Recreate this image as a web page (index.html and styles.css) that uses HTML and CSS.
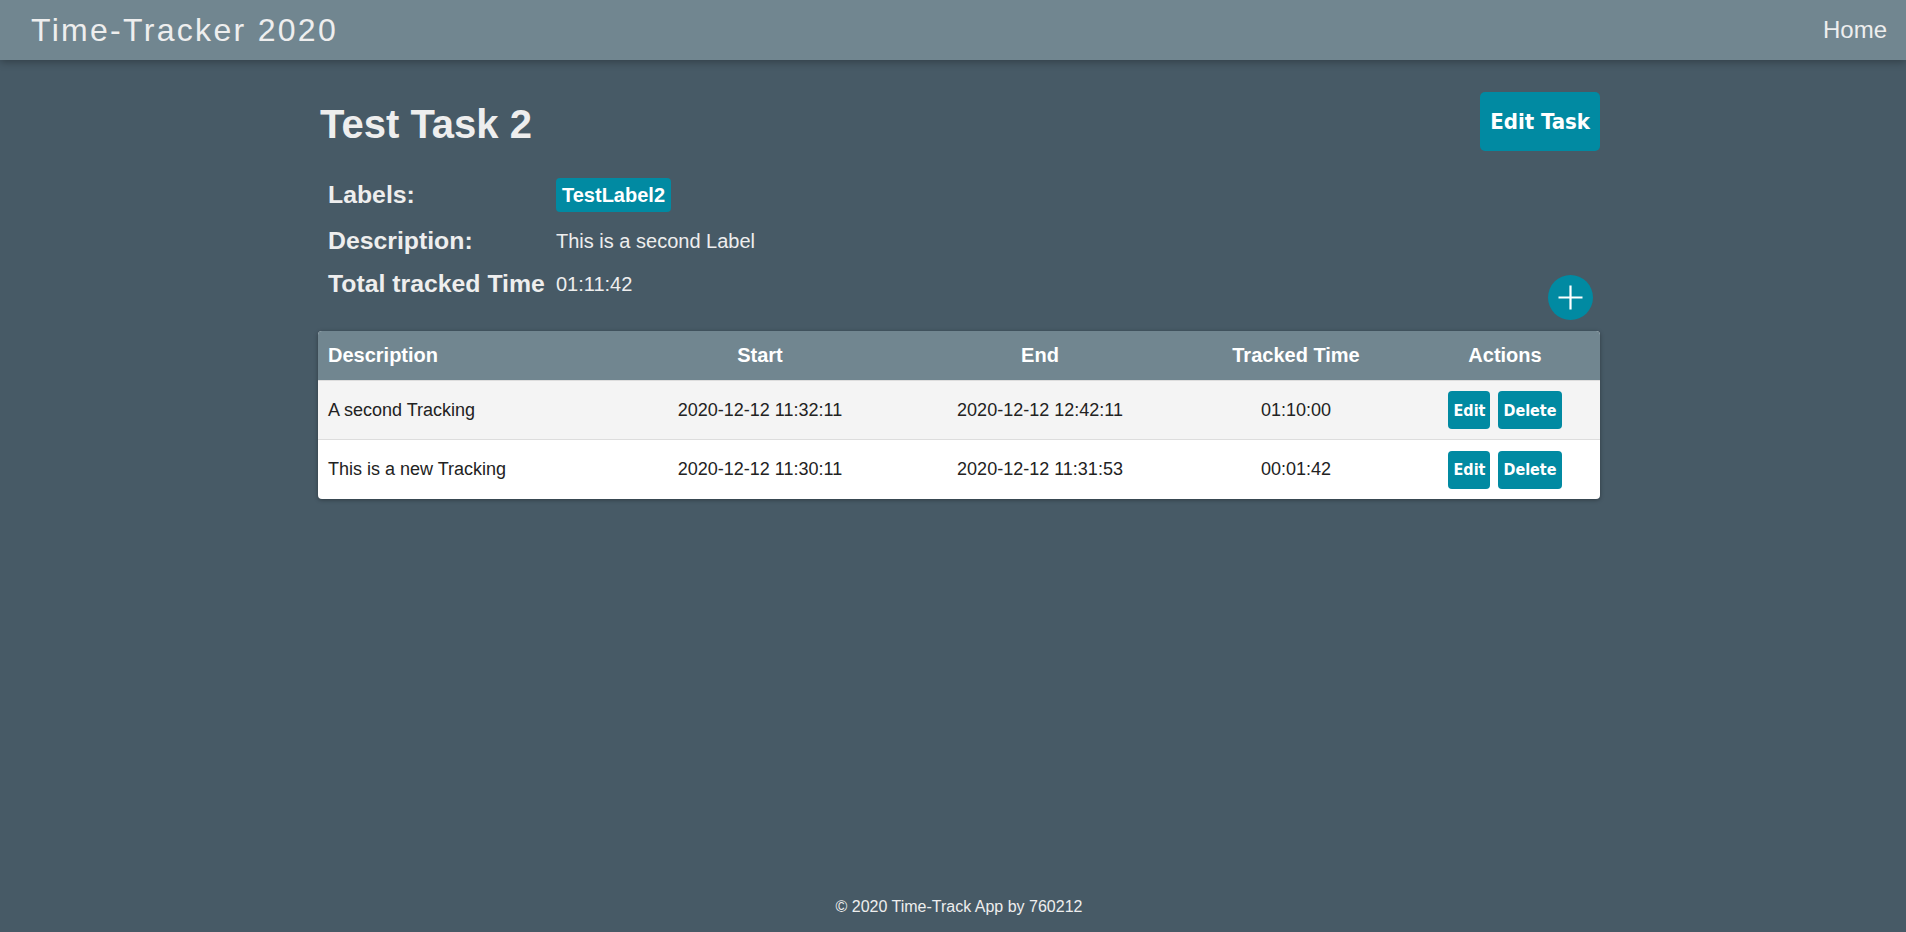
FILE: index.html
```html
<!DOCTYPE html>
<html lang="en">
<head>
<meta charset="utf-8">
<title>Time-Tracker 2020</title>
<link rel="stylesheet" href="styles.css">
</head>
<body>
<header class="navbar">
  <span class="brand">Time-Tracker 2020</span>
  <a class="nav-link" href="#">Home</a>
</header>
<div class="page">
  <main class="content">
    <div class="title-row">
      <h1 class="task-title">Test Task 2</h1>
      <button class="btn btn-large">Edit Task</button>
    </div>
    <div class="details">
      <div class="info">
        <div class="info-label">Labels:</div>
        <div class="info-value"><span class="badge">TestLabel2</span></div>
        <div class="info-label">Description:</div>
        <div class="info-value">This is a second Label</div>
        <div class="info-label">Total tracked Time</div>
        <div class="info-value">01:11:42</div>
      </div>
      <button class="add-btn" aria-label="Add tracking">
        <svg width="45" height="45" viewBox="0 0 45 45">
          <circle cx="22.5" cy="22.5" r="22.5" fill="#018aa2"/>
          <path d="M10.5 22.5H34.5M22.5 10.5V34.5" stroke="#fff" stroke-width="2.2" fill="none"/>
        </svg>
      </button>
    </div>
    <table class="track-table">
      <colgroup>
        <col class="c-desc"><col class="c-start"><col class="c-end"><col class="c-time"><col class="c-act">
      </colgroup>
      <thead>
        <tr><th class="left">Description</th><th>Start</th><th>End</th><th>Tracked Time</th><th>Actions</th></tr>
      </thead>
      <tbody>
        <tr class="odd">
          <td class="left">A second Tracking</td>
          <td>2020-12-12 11:32:11</td>
          <td>2020-12-12 12:42:11</td>
          <td>01:10:00</td>
          <td><div class="actions"><button class="btn btn-small">Edit</button><button class="btn btn-small">Delete</button></div></td>
        </tr>
        <tr>
          <td class="left">This is a new Tracking</td>
          <td>2020-12-12 11:30:11</td>
          <td>2020-12-12 11:31:53</td>
          <td>00:01:42</td>
          <td><div class="actions"><button class="btn btn-small">Edit</button><button class="btn btn-small">Delete</button></div></td>
        </tr>
      </tbody>
    </table>
  </main>
  <footer class="footer">© 2020 Time-Track App by 760212</footer>
</div>
</body>
</html>
```

FILE: styles.css
```css
html, body {
  margin: 0;
  padding: 0;
}

body {
  background: #475a66;
  color: #eeeeee;
  font-family: "Liberation Sans", Arial, sans-serif;
  min-height: 100vh;
  display: flex;
  flex-direction: column;
}

.navbar {
  height: 60px;
  flex: none;
  background: #718690;
  display: flex;
  align-items: center;
  justify-content: space-between;
  padding: 0 19px 0 31px;
  box-shadow: 0 2px 8px rgba(0, 0, 0, 0.3);
  position: relative;
  z-index: 1;
}

.brand {
  font-size: 32px;
  letter-spacing: 2.3px;
  color: #eeeeee;
}

.nav-link {
  font-size: 24px;
  color: #eeeeee;
  text-decoration: none;
}

.page {
  flex: 1;
  display: flex;
  flex-direction: column;
  padding: 0 306px 0 318px;
}

.content {
  flex: 1;
  padding-top: 32px;
}

.title-row {
  display: flex;
  justify-content: space-between;
  align-items: center;
}

.task-title {
  margin: 0;
  padding: 5px 0 0 2px;
  font-size: 40px;
  font-weight: bold;
  line-height: 1.1;
  color: #eeeeee;
}

.btn {
  border: none;
  background: #018aa2;
  color: #ffffff;
  font-family: "DejaVu Sans Condensed", "DejaVu Sans", sans-serif;
  font-weight: bold;
  cursor: pointer;
  margin: 0;
}

.btn-large {
  height: 59px;
  padding: 0 10px;
  font-size: 22px;
  border-radius: 5px;
}

.btn-small {
  height: 38px;
  padding: 0 5px;
  font-size: 16px;
  border-radius: 4px;
}

.details {
  display: flex;
  justify-content: space-between;
  align-items: flex-end;
  margin-top: 26px;
}

.info {
  display: grid;
  grid-template-columns: 228px auto;
  row-gap: 15px;
  align-items: center;
  padding: 1px 0 22px 10px;
}

.info-label {
  font-size: 24.8px;
  font-weight: bold;
  color: #eeeeee;
}

.info-value {
  font-size: 20px;
  color: #eeeeee;
}

.badge {
  display: inline-block;
  height: 34px;
  line-height: 34px;
  padding: 0 6px;
  background: #018aa2;
  color: #ffffff;
  font-weight: bold;
  font-size: 20px;
  border-radius: 4px;
}

.add-btn {
  border: none;
  background: none;
  padding: 0;
  margin: 0 7px 0 0;
  width: 45px;
  height: 45px;
  cursor: pointer;
  display: block;
}

.add-btn svg {
  display: block;
}

.track-table {
  width: 100%;
  margin-top: 11px;
  border-collapse: separate;
  border-spacing: 0;
  table-layout: fixed;
  border-radius: 4px;
  overflow: hidden;
  box-shadow: 0 1px 4px rgba(0, 0, 0, 0.35);
  background: #ffffff;
  color: #222222;
}

.c-desc { width: 304px; }
.c-start { width: 276px; }
.c-end { width: 284px; }
.c-time { width: 228px; }
.c-act { width: 190px; }

.track-table th {
  background: #718690;
  color: #ffffff;
  font-size: 20px;
  font-weight: bold;
  height: 50px;
  padding: 0 10px;
  text-align: center;
  border-bottom: 1px solid #dddddd;
  box-sizing: border-box;
}

.track-table td {
  font-size: 18px;
  height: 59px;
  padding: 0 10px;
  text-align: center;
  box-sizing: border-box;
}

.track-table tr.odd td {
  background: #f4f4f4;
  border-bottom: 1px solid #dddddd;
}

.track-table .left {
  text-align: left;
}

.actions {
  display: flex;
  justify-content: center;
  gap: 8px;
}

.footer {
  text-align: center;
  font-size: 16px;
  color: #eeeeee;
  padding: 10px 0 16px;
}
```
